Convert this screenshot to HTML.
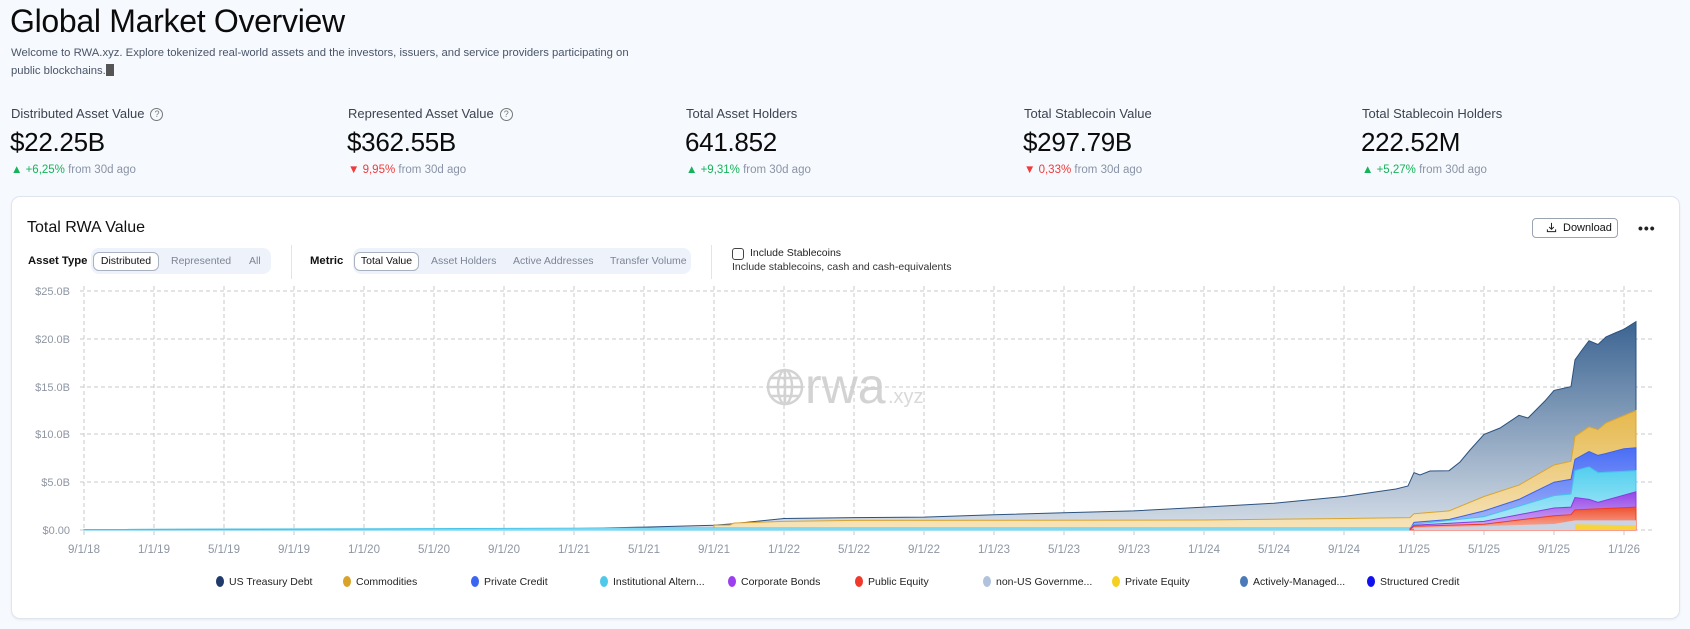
<!DOCTYPE html>
<html><head><meta charset="utf-8">
<style>
*{margin:0;padding:0;box-sizing:border-box}
body{width:1690px;height:629px;overflow:hidden;background:#f6f9fd;font-family:"Liberation Sans",sans-serif;color:#111;position:relative}
.abs{position:absolute;white-space:nowrap}
h1{position:absolute;left:10px;top:3px;font-size:32px;font-weight:400;letter-spacing:-0.3px;color:#0b0b0b}
.sub{font-size:11.3px;color:#4a5568;line-height:18px}
.lbl{font-size:13px;color:#3c4350}
.val{font-size:26px;color:#0b0b0b;letter-spacing:-0.3px}
.chg{font-size:11.5px;color:#8a94a6}
.up{color:#16b35a}.dn{color:#ef3b3b}
.q{display:inline-block;width:13px;height:13px;border:1.3px solid #777;border-radius:50%;font-size:9px;line-height:11px;text-align:center;color:#777;margin-left:6px;vertical-align:1px}
.card{position:absolute;left:11px;top:196px;width:1669px;height:423px;background:#fff;border:1px solid #dfe5ee;border-radius:9px;box-shadow:0 1px 2px rgba(0,0,0,.06)}
.seg{position:absolute;background:#eef3fb;border-radius:8px;height:26px}
.sb{position:absolute;top:4px;height:19px;border:1px solid #a9b2c0;background:#fff;border-radius:6px;font-size:10.5px;line-height:17px;text-align:center;color:#111}
.st{position:absolute;top:0;font-size:10.5px;line-height:26px;color:#7c8494}
.bl{font-size:11.3px;font-weight:700;color:#111}
.leg{position:absolute;top:576px;font-size:10.5px;color:#222;white-space:nowrap}
.leg i{display:inline-block;width:8px;height:11px;border-radius:50%;margin-right:5px;vertical-align:-2px}
</style></head><body>
<h1>Global Market Overview</h1>
<div class="abs sub" style="left:11px;top:44px">Welcome to RWA.xyz. Explore tokenized real-world assets and the investors, issuers, and service providers participating on</div>
<div class="abs sub" style="left:11px;top:62px">public blockchains.<span style="display:inline-block;width:8px;height:12px;background:#555;vertical-align:-2px"></span></div>

<div class="abs lbl" style="left:11px;top:106px">Distributed Asset Value<span class="q">?</span></div>
<div class="abs val" style="left:10px;top:127px">$22.25B</div>
<div class="abs chg" style="left:11px;top:164px"><span class="up">▲ +6,25%</span> from 30d ago</div>

<div class="abs lbl" style="left:348px;top:106px">Represented Asset Value<span class="q">?</span></div>
<div class="abs val" style="left:347px;top:127px">$362.55B</div>
<div class="abs chg" style="left:348px;top:164px"><span class="dn">▼ 9,95%</span> from 30d ago</div>

<div class="abs lbl" style="left:686px;top:106px">Total Asset Holders</div>
<div class="abs val" style="left:685px;top:127px">641.852</div>
<div class="abs chg" style="left:686px;top:164px"><span class="up">▲ +9,31%</span> from 30d ago</div>

<div class="abs lbl" style="left:1024px;top:106px">Total Stablecoin Value</div>
<div class="abs val" style="left:1023px;top:127px">$297.79B</div>
<div class="abs chg" style="left:1024px;top:164px"><span class="dn">▼ 0,33%</span> from 30d ago</div>

<div class="abs lbl" style="left:1362px;top:106px">Total Stablecoin Holders</div>
<div class="abs val" style="left:1361px;top:127px">222.52M</div>
<div class="abs chg" style="left:1362px;top:164px"><span class="up">▲ +5,27%</span> from 30d ago</div>

<div class="card"></div>
<div class="abs" style="left:27px;top:219px;font-size:16px;color:#111">Total RWA Value</div>

<div class="abs bl" style="left:28px;top:255px">Asset Type</div>
<div class="seg" style="left:91px;top:248px;width:180px">
 <div class="sb" style="left:2px;width:66px">Distributed</div>
 <div class="st" style="left:80px">Represented</div>
 <div class="st" style="left:158px">All</div>
</div>
<div class="abs" style="left:291px;top:245px;width:1px;height:34px;background:#dfe5ee"></div>
<div class="abs bl" style="left:310px;top:255px">Metric</div>
<div class="seg" style="left:353px;top:248px;width:338px">
 <div class="sb" style="left:1px;width:65px">Total Value</div>
 <div class="st" style="left:78px">Asset Holders</div>
 <div class="st" style="left:160px">Active Addresses</div>
 <div class="st" style="left:257px">Transfer Volume</div>
</div>
<div class="abs" style="left:711px;top:245px;width:1px;height:34px;background:#dfe5ee"></div>
<div class="abs" style="left:732px;top:248px;width:12px;height:12px;border:1px solid #444;border-radius:3px"></div>
<div class="abs" style="left:750px;top:247px;font-size:10.5px;color:#222">Include Stablecoins</div>
<div class="abs" style="left:732px;top:261px;font-size:10.5px;color:#333">Include stablecoins, cash and cash-equivalents</div>

<div class="abs" style="left:1532px;top:218px;width:86px;height:20px;border:1px solid #9aa3b0;border-radius:4px;font-size:11px;line-height:18px;color:#111;background:#fff">
<svg width="11" height="11" viewBox="0 0 12 12" style="position:absolute;left:13px;top:3px" fill="none" stroke="#222" stroke-width="1.1"><path d="M6 1v7M3.5 5.5L6 8l2.5-2.5M1.5 8v2.5h9V8"/></svg>
<span style="position:absolute;left:30px">Download</span></div>
<div class="abs" style="left:1638px;top:220px;font-size:14px;letter-spacing:1px;font-weight:700;color:#222">•••</div>

<svg class="abs" style="left:0;top:0" width="1690" height="629">
<defs>
<linearGradient id="gn" gradientUnits="userSpaceOnUse" x1="0" y1="320" x2="0" y2="530"><stop offset="0" stop-color="#3a6391"/><stop offset="1" stop-color="#d6dee8"/></linearGradient>
<linearGradient id="gg" gradientUnits="userSpaceOnUse" x1="0" y1="410" x2="0" y2="530"><stop offset="0" stop-color="#e6b84c"/><stop offset="1" stop-color="#f6e4bb"/></linearGradient>
<linearGradient id="gb" gradientUnits="userSpaceOnUse" x1="0" y1="448" x2="0" y2="530"><stop offset="0" stop-color="#4a6ef5"/><stop offset="1" stop-color="#a9baf8"/></linearGradient>
<linearGradient id="gc" gradientUnits="userSpaceOnUse" x1="0" y1="470" x2="0" y2="530"><stop offset="0" stop-color="#56d0ef"/><stop offset="1" stop-color="#b9ecf8"/></linearGradient>
<linearGradient id="gp" gradientUnits="userSpaceOnUse" x1="0" y1="492" x2="0" y2="530"><stop offset="0" stop-color="#9446e8"/><stop offset="1" stop-color="#d3b3f5"/></linearGradient>
<linearGradient id="gr" gradientUnits="userSpaceOnUse" x1="0" y1="507" x2="0" y2="530"><stop offset="0" stop-color="#f05030"/><stop offset="1" stop-color="#f7b2a0"/></linearGradient>
</defs>
<g stroke="#c4c8ce" stroke-width="1" stroke-dasharray="4,3" fill="none">
<path d="M80 291H1652M80 339H1652M80 387H1652M80 434H1652M80 482H1652M80 530H1652"/>
<path d="M84 286V536M154 286V536M224 286V536M294 286V536M364 286V536M434 286V536M504 286V536M574 286V536M644 286V536M714 286V536M784 286V536M854 286V536M924 286V536M994 286V536M1064 286V536M1134 286V536M1204 286V536M1274 286V536M1344 286V536M1414 286V536M1484 286V536M1554 286V536M1624 286V536"/>
</g>
<g font-size="11" fill="#8e96a3" text-anchor="end" font-family="Liberation Sans,sans-serif">
<text x="70" y="295">$25.0B</text><text x="70" y="343">$20.0B</text><text x="70" y="391">$15.0B</text><text x="70" y="438">$10.0B</text><text x="70" y="486">$5.0B</text><text x="70" y="534">$0.00</text>
</g>
<g font-size="11.5" fill="#8e96a3" text-anchor="middle" font-family="Liberation Sans,sans-serif">
<text x="84" y="553">9/1/18</text><text x="154" y="553">1/1/19</text><text x="224" y="553">5/1/19</text><text x="294" y="553">9/1/19</text><text x="364" y="553">1/1/20</text><text x="434" y="553">5/1/20</text><text x="504" y="553">9/1/20</text><text x="574" y="553">1/1/21</text><text x="644" y="553">5/1/21</text><text x="714" y="553">9/1/21</text><text x="784" y="553">1/1/22</text><text x="854" y="553">5/1/22</text><text x="924" y="553">9/1/22</text><text x="994" y="553">1/1/23</text><text x="1064" y="553">5/1/23</text><text x="1134" y="553">9/1/23</text><text x="1204" y="553">1/1/24</text><text x="1274" y="553">5/1/24</text><text x="1344" y="553">9/1/24</text><text x="1414" y="553">1/1/25</text><text x="1484" y="553">5/1/25</text><text x="1554" y="553">9/1/25</text><text x="1624" y="553">1/1/26</text>
</g>
<g opacity="0.9">
<g fill="none" stroke="#cfcfcf" stroke-width="2.5"><circle cx="785" cy="387" r="17"/><ellipse cx="785" cy="387" rx="7" ry="17"/><path d="M768 387H802M771 378H799M771 396H799M785 370V404"/></g>
<text x="805" y="403" font-size="50" fill="#cfcfcf" font-family="Liberation Sans,sans-serif">rwa</text>
<text x="888" y="403" font-size="20" fill="#d5d5d5" font-family="Liberation Sans,sans-serif">.xyz</text>
</g>
<path fill="url(#gn)" stroke="#2b527f" stroke-width="1" d="M84 529.5L504 529L574 528.6L644 527.1L714 525.2L730 524L784 518.5L854 517.6L924 517.1L994 514.7L1064 512.8L1134 510.9L1204 507.1L1274 503.2L1344 496.5L1396 489L1408 486L1414 472.6L1420 475L1430 471L1449 470.7L1460 462L1470 450L1484 434.4L1500 428L1519 415.3L1528 418L1545 400.9L1554 390.4L1571 386.6L1575 359.8L1582 350L1589 340.7L1598 344.5L1606 336.9L1615 333L1624 329.2L1636 321.6V530H84Z"/>
<path fill="url(#gg)" stroke="#d9a531" stroke-width="1" d="M714 530V525.2L730 525L734 523L784 521.4L854 520.4L1204 520L1344 518.5L1410 517.6L1414 513.7L1449 510.9L1484 496.5L1519 485.1L1554 465L1571 461.2L1575 436.3L1589 426.8L1598 429.6L1606 422.9L1636 410.5V530Z"/>
<path fill="url(#gb)" stroke="#3b62f0" stroke-width="1" d="M1410 530V529L1414 522.4L1449 519.5L1484 510.9L1519 499.4L1554 482.2L1571 479.3L1575 459.3L1589 451.6L1598 455.4L1606 453.5L1624 448.7L1636 447.8V530Z"/>
<path fill="url(#gc)" stroke="#45c4e8" stroke-width="1" d="M84 530V529.5L644 528L1410 528L1414 524.3L1484 516.6L1519 506.1L1554 495.6L1571 494L1575 470.7L1589 466.9L1598 472.6L1636 470.7V530Z"/>
<path fill="url(#gp)" stroke="#8a3be0" stroke-width="1" d="M1410 530V529L1414 525.2L1484 521.4L1554 508L1571 507.1L1575 497.5L1589 499.4L1598 502.3L1636 491.8V530Z"/>
<path fill="url(#gr)" stroke="#ee3a22" stroke-width="1" d="M1410 530V529.5L1414 526.2L1484 524.3L1554 515.7L1571 514.7L1575 509.9L1636 507.1V530Z"/>
<path fill="#c9d3e4" d="M1414 530V528L1554 524L1575 520.4L1636 520.4V530Z"/>
<path fill="#f7d43a" d="M1575 530V524.3L1636 525.2V530Z"/>
</svg>

<div class="leg" style="left:216px"><i style="background:#1f3a6b"></i>US Treasury Debt</div>
<div class="leg" style="left:343px"><i style="background:#d9a32a"></i>Commodities</div>
<div class="leg" style="left:471px"><i style="background:#3a66f2"></i>Private Credit</div>
<div class="leg" style="left:600px"><i style="background:#4ec9ea"></i>Institutional Altern...</div>
<div class="leg" style="left:728px"><i style="background:#9b3ff0"></i>Corporate Bonds</div>
<div class="leg" style="left:855px"><i style="background:#f0392b"></i>Public Equity</div>
<div class="leg" style="left:983px"><i style="background:#b1c2dc"></i>non-US Governme...</div>
<div class="leg" style="left:1112px"><i style="background:#f5d020"></i>Private Equity</div>
<div class="leg" style="left:1240px"><i style="background:#4a7ab8"></i>Actively-Managed...</div>
<div class="leg" style="left:1367px"><i style="background:#1010f0"></i>Structured Credit</div>
</body></html>
